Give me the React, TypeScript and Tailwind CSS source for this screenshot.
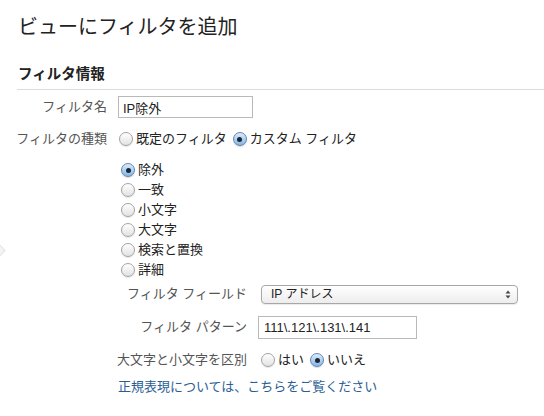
import * as React from 'react'

const font = { fontFamily: '"Liberation Sans", "Noto Sans CJK JP", sans-serif' }

// Mac風のラジオボタン
function Radio({ checked = false }: { checked?: boolean }) {
  return checked ? (
    <span className="inline-flex h-[14px] w-[14px] shrink-0 items-center justify-center rounded-full border border-[#5f87b3] bg-gradient-to-b from-[#dcecfb] to-[#86b6e6] shadow-[0_1px_1px_rgba(0,0,0,0.15)]">
      <span className="h-[5px] w-[5px] rounded-full bg-[#1b2633]" />
    </span>
  ) : (
    <span className="inline-block h-[14px] w-[14px] shrink-0 rounded-full border border-[#a3a3a3] bg-gradient-to-b from-[#ffffff] to-[#e2e2e2] shadow-[0_1px_1px_rgba(0,0,0,0.1)]" />
  )
}

function Option({ checked, label }: { checked?: boolean; label: string }) {
  return (
    <label className="flex h-[20px] items-center gap-[3px] whitespace-nowrap text-[13px] text-[#222]">
      <Radio checked={checked} />
      <span>{label}</span>
    </label>
  )
}

export default function App() {
  const filterTypes = ['除外', '一致', '小文字', '大文字', '検索と置換', '詳細']

  return (
    <div className="relative min-h-[416px] w-[544px] overflow-hidden bg-white" style={font}>
      {/* 左端のサイドバー切替 */}
      <span className="absolute left-[-5px] top-[246px] h-[9px] w-[9px] rotate-45 border border-[#e4e4e4] bg-[#f4f4f4]" />

      <h1 className="pl-[18px] pt-[15px] text-[20px] leading-[24px] text-[#222]">ビューにフィルタを追加</h1>

      <h2 className="mt-[25px] pl-[18px] text-[14.5px] font-bold leading-[20px] text-[#222]">フィルタ情報</h2>
      <div className="ml-[17px] mt-[5px] border-t border-[#dcdcdc]" />

      <div className="pl-[18px] text-[13px] text-[#555]">
        {/* フィルタ名 */}
        <div className="mt-[6px] flex h-[22px] items-center">
          <span className="flex w-[89px] shrink-0 justify-end whitespace-nowrap">フィルタ名</span>
          <input
            type="text"
            defaultValue="IP除外"
            className="ml-[11px] h-[22px] w-[135px] border border-[#b9b9b9] px-[4px] text-[13px] text-[#222] outline-none"
            style={font}
          />
        </div>

        {/* フィルタの種類 */}
        <div className="mt-[11px] flex h-[20px] items-center">
          <span className="flex w-[89px] shrink-0 justify-end whitespace-nowrap">フィルタの種類</span>
          <div className="ml-[12px] flex items-center gap-[6px]">
            <Option label="既定のフィルタ" />
            <Option checked label="カスタム フィルタ" />
          </div>
        </div>

        <div className="ml-[103px] mt-[11px] flex flex-col">
          {filterTypes.map((t, i) => (
            <Option key={t} checked={i === 0} label={t} />
          ))}
        </div>

        <div className="ml-[100px]">
          {/* フィルタ フィールド */}
          <div className="mt-[4px] flex h-[20px] items-center">
            <span className="flex w-[129px] shrink-0 justify-end whitespace-nowrap">フィルタ フィールド</span>
            <div className="ml-[14px] flex h-[19px] w-[257px] items-center justify-between rounded-[4px] border border-[#a7a7a7] bg-gradient-to-b from-[#ffffff] to-[#ededed] pl-[9px] pr-[6px] text-[12px] text-[#222] shadow-[0_1px_1px_rgba(0,0,0,0.08)]">
              <span>IP アドレス</span>
              <svg width="6" height="9" viewBox="0 0 6 9">
                <path d="M0.5 3.5 L3 0.5 L5.5 3.5 Z" fill="#444" />
                <path d="M0.5 5.5 L3 8.5 L5.5 5.5 Z" fill="#444" />
              </svg>
            </div>
          </div>

          {/* フィルタ パターン */}
          <div className="mt-[12px] flex h-[22px] items-center">
            <span className="flex w-[129px] shrink-0 justify-end whitespace-nowrap">フィルタ パターン</span>
            <input
              type="text"
              defaultValue="111\.121\.131\.141"
              className="ml-[11px] h-[23px] w-[159px] border border-[#b9b9b9] px-[5px] text-[13px] text-[#222] outline-none"
              style={font}
            />
          </div>

          {/* 大文字と小文字を区別 */}
          <div className="mt-[12px] flex h-[20px] items-center">
            <span className="flex w-[129px] shrink-0 justify-end whitespace-nowrap">大文字と小文字を区別</span>
            <div className="ml-[14px] flex items-center gap-[6px]">
              <Option label="はい" />
              <Option checked label="いいえ" />
            </div>
          </div>

          <a href="#" className="mt-[7px] block whitespace-nowrap leading-[20px] text-[#2a5e94]">
            正規表現については、こちらをご覧ください
          </a>
        </div>
      </div>
    </div>
  )
}
